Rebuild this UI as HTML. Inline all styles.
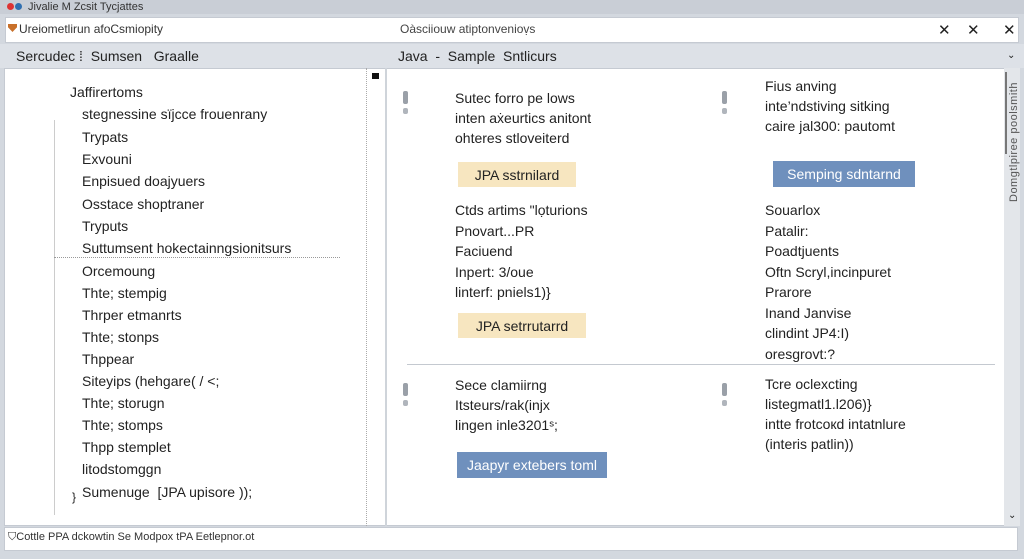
<!DOCTYPE html><html><head><style>
body{margin:0;width:1024px;height:559px;background:#d3d8df;font-family:"Liberation Sans",sans-serif;position:relative;overflow:hidden;color:#222}
.a{position:absolute;white-space:nowrap}
.l{position:absolute;left:82px;font-size:14px}
.t{font-size:14px;line-height:20px}
.btn{position:absolute;font-size:14px;padding:0;display:flex;align-items:center;justify-content:center}
.ic{position:absolute;width:6px}
.ic:before{content:"";position:absolute;left:0;top:0;width:5px;height:13px;background:#9aa0a8;border-radius:2px}
.ic:after{content:"";position:absolute;left:0;top:17px;width:5px;height:6px;background:#b0b5bc;border-radius:2px}
</style></head><body>
<div class="a" style="left:0;top:0;width:1024px;height:14px;background:#c9ced6"></div>
<div class="a" style="left:7px;top:3px;width:7px;height:7px;border-radius:50%;background:#d33"></div>
<div class="a" style="left:15px;top:3px;width:7px;height:7px;border-radius:50%;background:#2f6fb0"></div>
<div class="a" style="left:28px;top:0;font-size:11px;line-height:14px;color:#333">Jivalie M Zcsit Tycjattes</div>
<div class="a" style="left:5px;top:17px;width:1014px;height:26px;background:#fff;border:1px solid #c5cad2;box-sizing:border-box"></div>
<div class="a" style="left:8px;top:24px;width:9px;height:8px;background:#c8702a;clip-path:polygon(0 0,100% 0,100% 40%,50% 100%,0 40%)"></div>
<div class="a" style="left:19px;top:22px;font-size:12px;color:#333">Ureiometlirun afoCsmiopity</div>
<div class="a" style="left:400px;top:22px;font-size:12px;color:#444">Oàsciiouw atiptonvenioṿs</div>
<div class="a" style="left:938px;top:21px;font-size:15px;color:#222">✕</div>
<div class="a" style="left:967px;top:21px;font-size:15px;color:#222">✕</div>
<div class="a" style="left:1003px;top:21px;font-size:15px;color:#222">✕</div>
<div class="a" style="left:0;top:44px;width:1024px;height:24px;background:#dde1e7"></div>
<div class="a" style="left:16px;top:48px;font-size:14px">Sercudec ⁞&nbsp; Sumsen &nbsp;&nbsp;Graalle</div>
<div class="a" style="left:398px;top:48px;font-size:14px">Java &nbsp;- &nbsp;Sample &nbsp;Sntlicurs</div>
<div class="a" style="left:1007px;top:50px;font-size:10px">⌄</div>
<div class="a" style="left:4px;top:68px;width:1016px;height:458px;background:#fff;border:1px solid #c5cad2;box-sizing:border-box"></div>
<div class="a" style="left:385px;top:68px;width:2px;height:458px;background:#cfd4da"></div>
<div class="a" style="left:366px;top:68px;height:458px;border-left:1px dotted #aaa"></div>
<div class="a" style="left:54px;top:120px;width:1px;height:395px;background:#ccc"></div>
<div class="a" style="left:54px;top:257px;width:286px;border-top:1px dotted #999"></div>
<div class="a" style="left:372px;top:73px;width:7px;height:6px;background:#111"></div>
<div class="a" style="left:1004px;top:68px;width:16px;height:458px;background:#e3e6ea"></div>
<div class="a" style="left:1005px;top:72px;width:2px;height:82px;background:#777"></div>
<div class="a" style="left:1008px;top:202px;font-size:11px;color:#555;transform:rotate(-90deg);transform-origin:0 0;letter-spacing:0.5px">Domgtlpiree poolsmith</div>
<div class="a" style="left:1008px;top:510px;font-size:10px">⌄</div>
<div class="l" style="left:70px;top:84px">Jaffirertoms</div>
<div class="l" style="top:106px">stegnessine sïjcce frouenrany</div>
<div class="l" style="top:129px">Trypats</div>
<div class="l" style="top:151px">Exvouni</div>
<div class="l" style="top:173px">Enpisued doajyuers</div>
<div class="l" style="top:196px">Osstace shoptraner</div>
<div class="l" style="top:218px">Tryputs</div>
<div class="l" style="top:240px">Suttumsent hokectainngsionitsurs</div>
<div class="l" style="top:263px">Orcemoung</div>
<div class="l" style="top:285px">Thte; stempig</div>
<div class="l" style="top:307px">Thrper etmanrts</div>
<div class="l" style="top:329px">Thte; stonps</div>
<div class="l" style="top:351px">Thppear</div>
<div class="l" style="top:373px">Siteyips (hehgare( / &lt;;</div>
<div class="l" style="top:395px">Thte; storugn</div>
<div class="l" style="top:417px">Thte; stomps</div>
<div class="l" style="top:439px">Thpp stemplet</div>
<div class="l" style="top:461px">litodstomggn</div>
<div class="l" style="top:484px">Sumenuge &nbsp;[JPA upisore ));</div>
<div class="a" style="left:72px;top:490px;font-size:12px">}</div>
<div class="ic" style="left:403px;top:91px"></div>
<div class="a t" style="left:455px;top:88px">Sutec forro pe lows<br>inten aẋeurtics anitont<br>ohteres stloveiterd</div>
<div class="btn" style="left:458px;top:162px;width:118px;height:25px;background:#f7e6c0">JPA sstrnilard</div>
<div class="a t" style="left:455px;top:200px;line-height:20.5px">Ctds artims "lọturions<br>Pnovart...PR<br>Faciuend<br>Inpert: 3/oue<br>linterf: pniels1)}</div>
<div class="btn" style="left:458px;top:313px;width:128px;height:25px;background:#f7e6c0">JPA setrrutarrd</div>
<div class="ic" style="left:722px;top:91px"></div>
<div class="a t" style="left:765px;top:76px">Fius anving<br>inte’ndstiving sitking<br>caire jal300: pautomt</div>
<div class="btn" style="left:773px;top:161px;width:142px;height:26px;background:#6f90bd;color:#fff">Semping sdntarnd</div>
<div class="a t" style="left:765px;top:200px;line-height:20.5px">Souarlox<br>Patalir:<br>Poadtjuents<br>Oftn Scryl,incinpuret<br>Prarore<br>Inand Janvise<br>clindint JP4:I)<br>oresgrovt:?</div>
<div class="a" style="left:407px;top:364px;width:588px;height:1px;background:#c4c9d0"></div>
<div class="ic" style="left:403px;top:383px"></div>
<div class="a t" style="left:455px;top:375px">Sece clamiirng<br>Itsteurs/rak(injx<br>lingen inle3201ˢ;</div>
<div class="btn" style="left:457px;top:452px;width:150px;height:26px;background:#6f90bd;color:#fff">Jaapyr extebers toml</div>
<div class="ic" style="left:722px;top:383px"></div>
<div class="a t" style="left:765px;top:374px">Tcre oclexcting<br>listegmatl1.l206)}<br>intte frotcoкd intatnlure<br>(interis patlin))</div>
<div class="a" style="left:4px;top:527px;width:1014px;height:24px;background:#fff;border:1px solid #c5cad2;box-sizing:border-box"></div>
<div class="a" style="left:8px;top:531px;font-size:11px;color:#333">⛉Cottle PPA dckowtin Se Modpox tPA Eetlepnor.ot</div>
</body></html>
